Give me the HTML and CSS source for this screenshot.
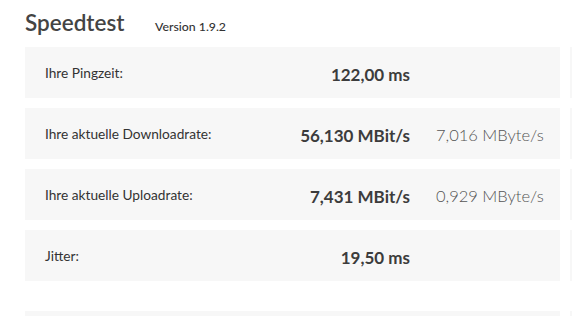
FILE: index.html
```html
<!DOCTYPE html>
<html lang="de">
<head>
    <meta charset="UTF-8">
    <title>Speedtest</title>
    <link rel="stylesheet" href="styles.css">
</head>
<body>
    <div class="page">
        <div class="head">
            <h1>Speedtest</h1>
            <span class="version">Version 1.9.2</span>
        </div>
        <div class="columns">
            <div class="results">
                <div class="row">
                    <span class="label">Ihre Pingzeit:</span>
                    <span class="value">122,00 ms</span>
                    <span class="extra"></span>
                </div>
                <div class="row">
                    <span class="label">Ihre aktuelle Downloadrate:</span>
                    <span class="value">56,130 MBit/s</span>
                    <span class="extra">7,016 MByte/s</span>
                </div>
                <div class="row">
                    <span class="label">Ihre aktuelle Uploadrate:</span>
                    <span class="value">7,431 MBit/s</span>
                    <span class="extra">0,929 MByte/s</span>
                </div>
                <div class="row">
                    <span class="label">Jitter:</span>
                    <span class="value">19,50 ms</span>
                    <span class="extra"></span>
                </div>
                <div class="row next"></div>
            </div>
            <div class="results side">
                <div class="row"></div>
                <div class="row"></div>
                <div class="row"></div>
                <div class="row"></div>
                <div class="row next"></div>
            </div>
        </div>
    </div>
</body>
</html>
```

FILE: styles.css
```css
/* General */
body {
    margin: 0;
    font-family: Lato, "Open Sans", sans-serif;
    color: #3c3c3c;
    background: #fff;
    overflow: hidden;
}

.page {
    padding: 0 0 0 25px;
}

/* Heading */
.head {
    display: flex;
    align-items: baseline;
    height: 47px;
}

h1 {
    margin: 0;
    font-size: 22.5px;
    font-weight: 600;
    line-height: 46px;
    color: #444;
    width: 130px;
}

.version {
    font-size: 12.3px;
    font-weight: 500;
    color: #333;
}

/* Result rows */
.columns {
    display: grid;
    grid-template-columns: 535px 535px;
    gap: 10px;
}

.results {
    display: flex;
    flex-direction: column;
    gap: 10px;
}

.row {
    display: flex;
    align-items: center;
    height: 51px;
    padding-left: 20px;
    background: #f7f7f7;
    white-space: nowrap;
}

.row.next {
    margin-top: 20px;
}

.label {
    flex: 1;
    font-size: 13.7px;
    color: #333;
    padding-bottom: 1px;
}

.value {
    width: 130px;
    text-align: right;
    font-size: 17px;
    font-weight: 700;
    color: #3c3c3c;
    padding-top: 3px;
}

.extra {
    width: 124px;
    padding-left: 26px;
    font-size: 16.5px;
    font-weight: 300;
    color: #555;
    padding-top: 3px;
}
```
